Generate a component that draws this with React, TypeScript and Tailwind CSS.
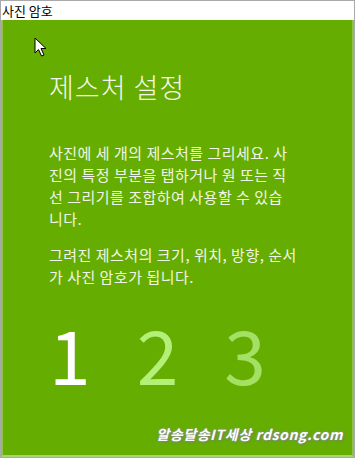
import type { FC } from "react";

const Cursor: FC = () => (
  <svg width="14" height="20" viewBox="0 0 14 20" className="absolute left-[31px] top-[17px]">
    <path d="M1 1 L1 16 L4.5 12.5 L7.5 19 L10 18 L7 11.5 L12 11.5 Z" fill="#fff" stroke="#000" strokeWidth="1" strokeLinejoin="round" />
  </svg>
);

export default function App() {
  const font = { fontFamily: '"Noto Sans CJK KR", "Noto Sans", sans-serif' };
  return (
    <div className="w-[355px] h-[458px] flex flex-col border border-[#a9a9a9] bg-white overflow-hidden" style={font}>
      <div className="h-[19px] flex items-center px-[1px] text-[13px] text-black leading-none">사진 암호</div>
      <div className="relative flex-1 bg-[#65ad00] border-l-2 border-l-[#8fc34a] border-r-2 border-r-[#8cc24a] border-b-2 border-b-[#a6d37a] flex flex-col pl-[46px]">
        <Cursor />
        <h1 className="mt-[49px] text-[27px] font-light text-[#f4f8ec] leading-[36px] tracking-[1px]">제스처 설정</h1>
        <div className="mt-[37px] text-[15px] leading-[22px] text-[#f2f6e6] tracking-[0.5px]">
          <p>사진에 세 개의 제스처를 그리세요. 사</p>
          <p>진의 특정 부분을 탭하거나 원 또는 직</p>
          <p>선 그리기를 조합하여 사용할 수 있습</p>
          <p>니다.</p>
        </div>
        <div className="mt-[14px] text-[15px] leading-[22px] text-[#f2f6e6] tracking-[0.5px]">
          <p>그려진 제스처의 크기, 위치, 방향, 순서</p>
          <p>가 사진 암호가 됩니다.</p>
        </div>
        <div className="mt-[27px] flex items-end gap-[46px] text-[75px] font-normal leading-none">
          <span className="text-white">1</span>
          <span className="text-[#b4ef78]">2</span>
          <span className="text-[#a4e063]">3</span>
        </div>
        <div className="absolute right-[9px] bottom-[10px] text-[14px] font-bold italic text-white tracking-[0.6px] [text-shadow:0_0_2px_#8a9a80,0_0_3px_#8a9a80,1px_1px_2px_#6b7a60]">
          알송달송IT세상 rdsong.com
        </div>
      </div>
    </div>
  );
}
